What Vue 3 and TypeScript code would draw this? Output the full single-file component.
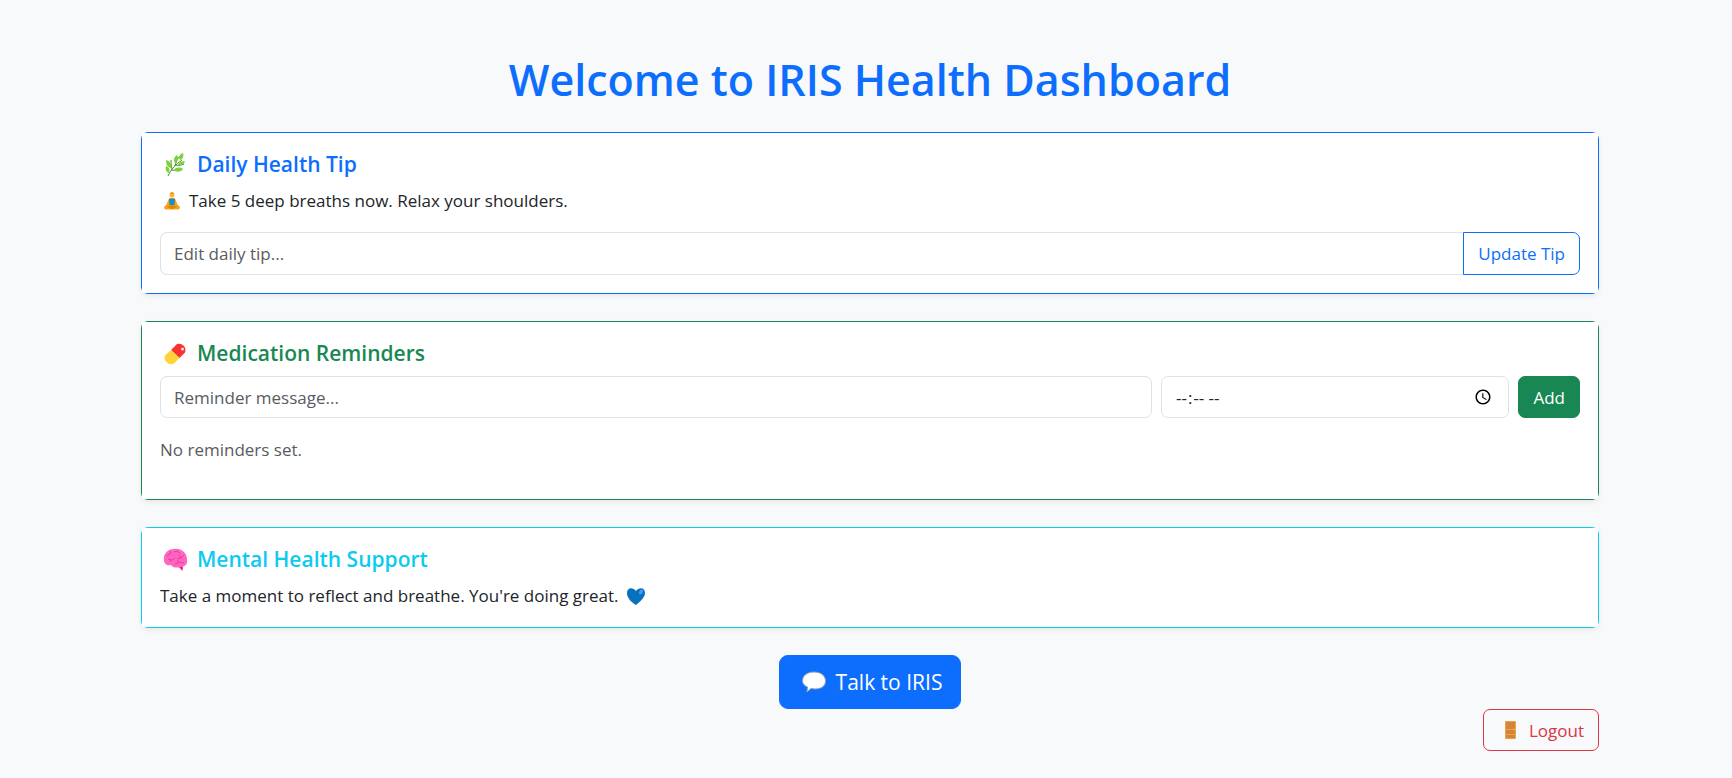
<script setup lang="ts">
import { ref } from 'vue'

interface Reminder {
  message: string
  time: string
}

const tip = ref('Take 5 deep breaths now. Relax your shoulders.')
const tipDraft = ref('')
const message = ref('')
const time = ref('')
const reminders = ref<Reminder[]>([])

function updateTip(): void {
  if (!tipDraft.value.trim()) return
  tip.value = tipDraft.value.trim()
  tipDraft.value = ''
}

function addReminder(): void {
  if (!message.value.trim() || !time.value) return
  reminders.value.push({ message: message.value.trim(), time: time.value })
  message.value = ''
  time.value = ''
}
</script>

<template>
  <main class="page">
    <h1 class="title">Welcome to IRIS Health Dashboard</h1>

    <section class="card primary">
      <div class="body">
        <h2 class="heading">
          <svg class="icon" viewBox="0 0 24 24" aria-hidden="true">
            <path d="M5 23C8 16 13 11 19 7M9 16C8 12 8 10 8 7M12 13C13 9 14 6 17 3M8 17C13 18 16 17 19 16M13 12C16 13 18 12 21 11" fill="none" stroke="#44912d" stroke-width="1" />
            <path d="M17 7C15 4 17 1 20 0C21 3 20 6 17 7ZM12 10C10 7 11 4 14 2C16 5 15 8 12 10ZM8 15C4 14 3 11 3 7C7 8 9 11 8 15ZM15 12C16 9 19 8 22 8C21 11 19 13 15 12ZM11 17C13 14 17 14 20 16C18 19 14 20 11 17ZM6 20C3 19 2 16 3 13C6 14 7 17 6 20Z" fill="#7bd239" />
          </svg>
          <span>Daily Health Tip</span>
        </h2>
        <p class="text">
          <svg class="icon small" viewBox="0 0 18 18" aria-hidden="true">
            <path d="M6 6.500Q9 5 12 6.500L14.500 12.500L17 15Q17 18 13 17.500H5Q1 18 1 15L3.500 12.500Z" fill="#f9a51a" />
            <path d="M6 7Q9 6 12 7L11.500 13H6.500Z" fill="#168fd0" />
            <path d="M3 14.500L9 13L15 14.500L10 17H8Z" fill="#e18800" />
            <circle cx="9" cy="3" r="2.500" fill="#ffb52e" />
            <path d="M7 2Q7 0 9 0T11 2Z" fill="#e59a20" />
          </svg>
          <span>{{ tip }}</span>
        </p>
        <form class="tip-form" @submit.prevent="updateTip">
          <input v-model="tipDraft" class="field joined" type="text" placeholder="Edit daily tip..." aria-label="Daily tip" />
          <button class="btn outline-primary joined" type="submit">Update Tip</button>
        </form>
      </div>
    </section>

    <section class="card success">
      <div class="body">
        <h2 class="heading">
          <svg class="icon" viewBox="0 0 24 24" aria-hidden="true">
            <path d="M8 8L14 2A6.500 6.500 0 0 1 22 10.500L16.500 16Z" fill="#fb312d" />
            <path d="M8 8L16.500 16L11 21.500A6.500 6.500 0 0 1 2 13.500Z" fill="#ffd43b" />
            <circle cx="19.500" cy="7" r="1.500" fill="#ffe4e4" />
          </svg>
          <span>Medication Reminders</span>
        </h2>
        <form class="reminder-form" @submit.prevent="addReminder">
          <input v-model="message" class="field" type="text" placeholder="Reminder message..." aria-label="Reminder message" />
          <input v-model="time" class="field time" type="time" aria-label="Reminder time" />
          <button class="btn solid-success" type="submit">Add</button>
        </form>
        <ul v-if="reminders.length" class="list">
          <li v-for="(item, index) in reminders" :key="index">{{ item.time }} {{ item.message }}</li>
        </ul>
        <p v-else class="text muted">No reminders set.</p>
      </div>
    </section>

    <section class="card info">
      <div class="body">
        <h2 class="heading">
          <svg class="icon" viewBox="0 0 24 24" aria-hidden="true">
            <path d="M15 18L20 17.500L19.500 23Z" fill="#f20c91" />
            <path d="M1 12C0 7 4 1 11 1C18 0 24 5 24 11C25 16 22 19 18 19C14 20 10 20 8 17C4 18 1 16 1 12Z" fill="#ff66c0" />
            <path d="M4 8L8 5L7 3M11 4L14 3L17 5M5 11L9 12L12 10M8 12L7 14M14 11L18 10L21 7M18 10L16 7M12 16L17 14L21 15M16 14L14 12" fill="none" stroke="#f4269f" stroke-width="0.800" />
          </svg>
          <span>Mental Health Support</span>
        </h2>
        <p class="text last">
          <span>Take a moment to reflect and breathe. You're doing great.</span>
          <svg class="icon heart" viewBox="0 0 18 18" aria-hidden="true">
            <path d="M9 18C4 14 0 10 0 6C0 0 6 0 9 4C12 0 18 0 18 6C18 10 14 14 9 18Z" fill="#0871bd" />
            <path d="M0 5C0 11 5 14 9 18C7 17 0 12 0 6Z" fill="#06478b" />
            <ellipse cx="14" cy="5" rx="1.800" ry="2.600" transform="rotate(35 14 5)" fill="#4796ff" />
          </svg>
        </p>
      </div>
    </section>

    <div class="talk">
      <button class="btn large" type="button">
        <svg class="icon" viewBox="0 0 24 24" aria-hidden="true">
          <path d="M12 2C18 2 23.500 5 23.500 11S18 19 13 19L9 18.500L5 22L5.500 17C3 16 0.500 14 0.500 11C0.500 5 6 2 12 2Z" fill="#fff" stroke="#8aa0bd" stroke-width="1" />
        </svg>
        <span>Talk to IRIS</span>
      </button>
    </div>
    <div class="leave">
      <button class="btn outline-danger" type="button">
        <svg class="icon small" viewBox="0 0 18 18" aria-hidden="true">
          <rect x="4" y="0" width="11" height="18" rx="1" fill="#eba049" />
          <path d="M5 1H14V8H5ZM5 9H14V13H5ZM5 14H14V17H5Z" fill="#d3863a" />
          <circle cx="13.500" cy="8.500" r="1" fill="#ffb040" />
        </svg>
        <span>Logout</span>
      </button>
    </div>
  </main>
</template>

<style>
body {
  margin: 0;
  background: #f8f9fa;
}
</style>

<style scoped>
* {
  box-sizing: border-box;
}

.page {
  max-width: 1466px;
  margin: 0 auto;
  padding: 53px 0 24px 8px;
  color: #212529;
  font-family: "Segoe UI", "Open Sans", "Noto Sans", sans-serif;
  font-size: 17px;
  line-height: 27px;
}

.title {
  margin: 0 0 25px;
  color: #0d6efd;
  font-size: 43px;
  font-weight: 600;
  line-height: 54px;
  text-align: center;
}

.card {
  margin-bottom: 27px;
  border: 1px solid;
  border-radius: 7px;
  box-shadow: 0 2px 5px rgba(0, 0, 0, 0.075);
}

.primary { border-color: #0d6efd; }
.success { border-color: #198754; }
.info { border-color: #0dcaf0; }

.body {
  padding: 18px;
  border-radius: 2px;
  background: #fff;
}

.heading {
  display: flex;
  align-items: center;
  gap: 10px;
  margin: 0 0 9px;
  padding-left: 3px;
  font-size: 21px;
  font-weight: 600;
  line-height: 27px;
}

.primary .heading { color: #0d6efd; }
.success .heading { color: #198754; }
.info .heading { color: #0dcaf0; }

.icon {
  flex: none;
  width: 24px;
  height: 24px;
}

.icon.small {
  width: 18px;
  height: 18px;
  margin-left: 3px;
}

.icon.heart {
  width: 18px;
  height: 18px;
}

.text {
  display: flex;
  align-items: center;
  gap: 8px;
  margin: 0 0 18px;
}

.text.last { margin-bottom: 0; }
.text.muted { color: #585c5f; }

.tip-form {
  display: flex;
}

.reminder-form {
  display: grid;
  grid-template-columns: 74fr 26fr auto;
  gap: 9px;
  margin-bottom: 18px;
}

.field {
  min-width: 0;
  height: 42px;
  padding: 0 13px;
  border: 1px solid #dee2e6;
  border-radius: 7px;
  background: #fff;
  color: #212529;
  font: inherit;
}

.field::placeholder {
  color: #585c5f;
  opacity: 1;
}

.field.joined {
  flex: 1;
  height: 43px;
  border-right: 0;
  border-radius: 7px 0 0 7px;
}

.time::-webkit-calendar-picker-indicator {
  width: 18px;
  height: 18px;
}

.btn {
  display: inline-flex;
  align-items: center;
  justify-content: center;
  gap: 10px;
  height: 42px;
  padding: 0 14px;
  border: 1px solid;
  border-radius: 7px;
  background: transparent;
  font: inherit;
  white-space: nowrap;
  cursor: pointer;
}

.btn.joined {
  height: 43px;
  border-radius: 0 7px 7px 0;
}

.outline-primary { border-color: #0d6efd; color: #0d6efd; }
.outline-danger { border-color: #dc3545; color: #dc3545; }
.solid-success { border-color: #198754; background: #198754; color: #fff; }

.large {
  height: 54px;
  padding: 0 18px 0 22px;
  border-color: #0d6efd;
  border-radius: 9px;
  background: #0d6efd;
  color: #fff;
  font-size: 21px;
}

.list {
  margin: 0 0 18px;
  padding-left: 18px;
}

.talk {
  display: flex;
  justify-content: center;
}

.leave {
  display: flex;
  justify-content: flex-end;
}
</style>
